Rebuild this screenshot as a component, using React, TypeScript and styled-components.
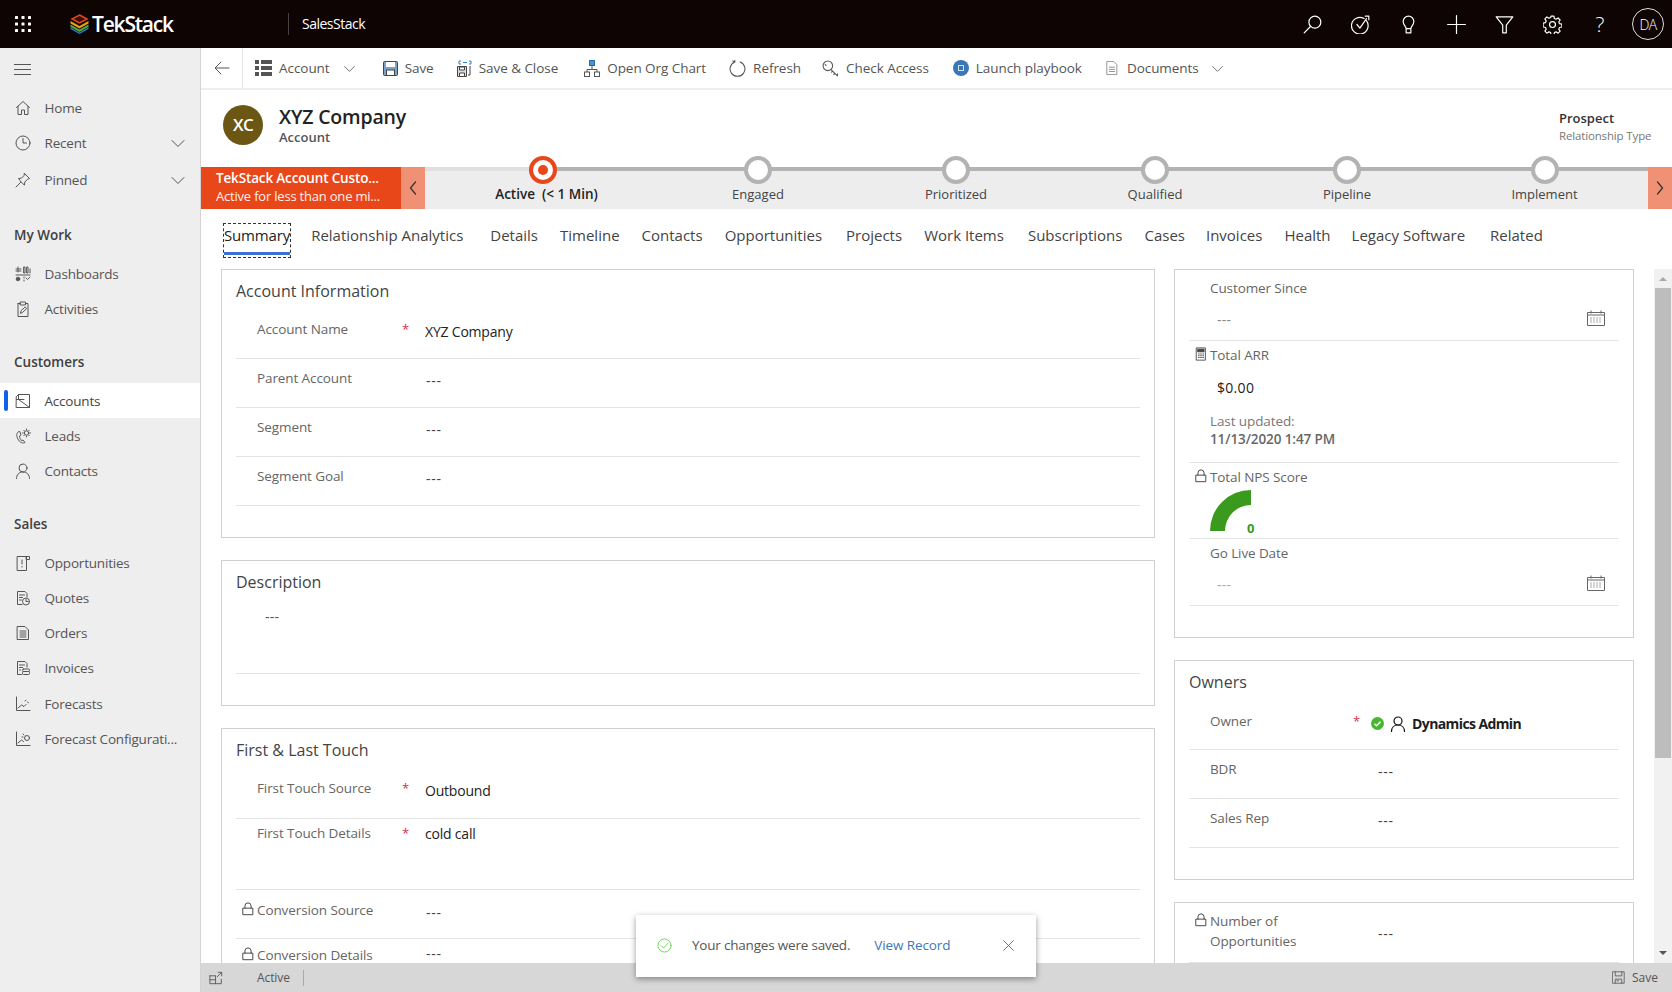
import React from "react";
import styled, { createGlobalStyle } from "styled-components";

const FONT = `"Open Sans", "Noto Sans", sans-serif`;

const Global = createGlobalStyle`
  html, body { margin: 0; padding: 0; height: 100%; overflow: hidden; background: #fff; }
  body { font-family: ${FONT}; font-size: 14px; color: #333; }
  #root { height: 100%; }
  * { box-sizing: border-box; }
`;

const Shell = styled.div`
  width: 1672px;
  height: 992px;
  position: relative;
  display: flex;
  flex-direction: column;
  overflow: hidden;
`;

/* ---------- top bar ---------- */
const TopBar = styled.header`
  height: 48px;
  flex: none;
  background: #0f0404;
  color: #fff;
  display: flex;
  align-items: center;
`;
const Waffle = styled.div`
  width: 46px;
  display: flex;
  justify-content: center;
`;
const Brand = styled.div`
  width: 242px;
  padding-left: 24px;
  display: flex;
  align-items: center;
  gap: 3px;
`;
const BrandName = styled.span`
  font-family: "Open Sans", sans-serif;
  font-size: 21px;
  font-weight: 600;
  letter-spacing: -1.2px;
`;
const AppName = styled.div`
  border-left: 1px solid #4a4040;
  height: 22px;
  padding-left: 13px;
  font-size: 14px;
  line-height: 22px;
  letter-spacing: -0.5px;
`;
const TopActions = styled.div`
  margin-left: auto;
  display: flex;
  align-items: center;
`;
const TopAction = styled.div`
  width: 48px;
  height: 48px;
  display: flex;
  align-items: center;
  justify-content: center;
  font-size: 21px;
  font-weight: 300;
`;
const Avatar = styled.div`
  width: 32px;
  height: 32px;
  border-radius: 50%;
  border: 1px solid #ddd;
  display: flex;
  align-items: center;
  justify-content: center;
  font-size: 14px;
  letter-spacing: -0.6px;
`;

/* ---------- body ---------- */
const Body = styled.div`
  flex: 1;
  min-height: 0;
  display: flex;
`;
const Sidebar = styled.nav`
  width: 201px;
  flex: none;
  background: #eeeeee;
  border-right: 1px solid #d4d4d4;
  color: #555;
`;
const Burger = styled.div`
  height: 42px;
  padding-left: 14px;
  display: flex;
  align-items: center;
`;
const NavRow = styled.div<{ $active?: boolean; $top?: number }>`
  height: 35px;
  margin-top: ${(p) => p.$top ?? 0}px;
  padding-left: 15px;
  padding-right: 14px;
  display: flex;
  align-items: center;
  position: relative;
  background: ${(p) => (p.$active ? "#fff" : "transparent")};
  color: ${(p) => (p.$active ? "#444" : "#555")};

  &::before {
    content: "";
    display: ${(p) => (p.$active ? "block" : "none")};
    position: absolute;
    left: 4px;
    top: 7px;
    bottom: 7px;
    width: 4px;
    border-radius: 2px;
    background: #1160e8;
  }
`;
const NavIcon = styled.span`
  width: 29.5px;
  flex: none;
  display: flex;
  align-items: center;
`;
const NavLabel = styled.span`
  flex: 1;
  white-space: nowrap;
  font-size: 13.5px;
  letter-spacing: -0.2px;
`;
const NavHeading = styled.div<{ $top: number }>`
  margin-top: ${(p) => p.$top}px;
  margin-bottom: 11px;
  padding-left: 14px;
  height: 20px;
  line-height: 20px;
  font-size: 13.5px;
  font-weight: 600;
  color: #3f3f3f;
`;

const Main = styled.main`
  flex: 1;
  min-width: 0;
  display: flex;
  flex-direction: column;
`;
const Toolbar = styled.div`
  height: 42px;
  flex: none;
  display: flex;
  align-items: center;
  border-bottom: 2px solid #eeeeee;
  color: #555;
`;
const BackButton = styled.div`
  width: 42px;
  height: 40px;
  border-right: 1px solid #e6e6e6;
  display: flex;
  align-items: center;
  justify-content: center;
`;
const ToolItem = styled.div<{ $left: number; $gap?: number }>`
  margin-left: ${(p) => p.$left}px;
  display: flex;
  align-items: center;
  gap: ${(p) => p.$gap ?? 7}px;
  white-space: nowrap;
  font-size: 13.5px;
  letter-spacing: -0.05px;
`;
const ToolChevron = styled.span<{ $gap?: number }>`
  margin-left: ${(p) => p.$gap ?? 6}px;
  display: flex;
`;

const RecordHeader = styled.div`
  height: 77px;
  flex: none;
  display: flex;
  align-items: center;
  padding: 0 20px 8px 22px;
`;
const RecordAvatar = styled.div`
  width: 40px;
  height: 40px;
  border-radius: 50%;
  background: #6b5713;
  color: #fff;
  display: flex;
  align-items: center;
  justify-content: center;
  font-size: 17px;
  font-weight: 600;
  letter-spacing: -0.8px;
  margin-right: 16px;
`;
const RecordTitle = styled.div`
  font-size: 19.5px;
  font-weight: 600;
  color: #222;
  line-height: 25px;
  letter-spacing: -0.2px;
`;
const RecordType = styled.div`
  font-size: 13px;
  font-weight: 600;
  color: #555;
  line-height: 17px;
`;
const RecordMeta = styled.div`
  margin-left: auto;
  margin-top: 4px;
  width: 94px;
  margin-right: -1px;
`;
const MetaValue = styled.div`
  font-size: 13px;
  font-weight: 600;
  color: #333;
  line-height: 18px;
`;
const MetaLabel = styled.div`
  font-size: 11.5px;
  color: #777;
  line-height: 17px;
  white-space: nowrap;
  letter-spacing: -0.15px;
`;

const ProcessBar = styled.div`
  height: 42px;
  flex: none;
  display: flex;
  background:
    linear-gradient(to right, #dfdfdf 342px, #b3b3b3 342px) no-repeat top left / 100% 4px,
    #ededed;
`;
const ActiveStage = styled.div`
  width: 200px;
  flex: none;
  background: #e8471a;
  color: #fff;
  padding: 3px 0 0 15px;
  white-space: nowrap;
  overflow: hidden;
`;
const StageName = styled.div`
  font-size: 13.5px;
  font-weight: 600;
  line-height: 17px;
  letter-spacing: -0.15px;
`;
const StageTime = styled.div`
  font-size: 13px;
  line-height: 19px;
  letter-spacing: -0.2px;
  color: #fff0ea;
`;
const StepNav = styled.div`
  width: 24px;
  flex: none;
  background: #f09074;
  display: flex;
  align-items: center;
  justify-content: center;
  color: #333;
`;
const Stages = styled.div`
  flex: 1;
  display: flex;
`;
const Stage = styled.div<{ $width: number; $current?: boolean }>`
  width: ${(p) => p.$width}px;
  flex: none;
  display: flex;
  flex-direction: column;
  align-items: center;
  font-size: ${(p) => (p.$current ? 13.5 : 13)}px;
  font-weight: ${(p) => (p.$current ? 600 : 400)};
  color: ${(p) => (p.$current ? "#222" : "#444")};
  white-space: nowrap;
`;
const StageDot = styled.span<{ $current?: boolean }>`
  width: 28px;
  height: 28px;
  margin-top: -11px;
  border-radius: 50%;
  background: #fff;
  border: 4px solid ${(p) => (p.$current ? "#e8471a" : "#b3b3b3")};
  display: flex;
  align-items: center;
  justify-content: center;

  &::after {
    content: "";
    display: ${(p) => (p.$current ? "block" : "none")};
    width: 10px;
    height: 10px;
    border-radius: 50%;
    background: #e8471a;
  }
`;
const StageLabel = styled.span<{ $current?: boolean }>`
  line-height: 20px;
  margin-left: ${(p) => (p.$current ? 7 : 0)}px;
`;

const Tabs = styled.div`
  height: 48px;
  flex: none;
  padding: 15px 0 0 23px;
  display: flex;
  font-size: 15px;
  color: #444;
`;
const Tab = styled.div<{ $selected?: boolean; $left: number }>`
  margin-left: ${(p) => p.$left}px;
  height: 33px;
  line-height: 22px;
  white-space: nowrap;
  color: ${(p) => (p.$selected ? "#222" : "#444")};
  ${(p) => (p.$selected ? `letter-spacing: -0.15px; outline: 1px dashed #333; box-shadow: inset 0 -2px 0 #fff, inset 0 -5px 0 #3a6fd8;` : "")}
`;

const Content = styled.div`
  flex: 1;
  min-height: 0;
  display: flex;
  overflow: hidden;
`;
const Columns = styled.div`
  flex: 1;
  display: grid;
  grid-template-columns: 934px 460px;
  column-gap: 19px;
  padding: 12px 0 0 20px;
  align-items: start;
`;
const Column = styled.div`
  display: flex;
  flex-direction: column;
  gap: 22px;
  min-width: 0;
`;
const Card = styled.section<{ $height?: number }>`
  border: 1px solid #d0d0d0;
  padding: 0 14px;
  ${(p) => (p.$height ? `height: ${p.$height}px;` : "")}
  overflow: hidden;
`;
const CardTitle = styled.h2`
  margin: 0;
  padding-top: 10px;
  height: 42px;
  font-size: 16px;
  font-weight: 400;
  line-height: 22px;
  color: #444;
`;
const Row = styled.div<{ $height: number; $top?: number }>`
  height: ${(p) => p.$height}px;
  display: flex;
  align-items: flex-start;
  border-bottom: 1px solid #e4e4e4;
  padding-top: ${(p) => p.$top ?? 9}px;
`;
const LockSlot = styled.span`
  width: 21px;
  flex: none;
  padding-left: 5px;
  margin-top: 2px;
  display: flex;
  color: #333;
`;
const Label = styled.span<{ $width?: number }>`
  ${(p) => (p.$width ? `width: ${p.$width}px; flex: none;` : "")}
  font-size: 13.5px;
  line-height: 20px;
  color: #666;
  letter-spacing: -0.1px;
`;
const Star = styled.span<{ $width: number }>`
  width: ${(p) => p.$width}px;
  flex: none;
  color: #d1334a;
  font-size: 13px;
  line-height: 20px;
`;
const Value = styled.span<{ $dim?: boolean; $offset?: number }>`
  font-size: 14px;
  line-height: 14px;
  margin-top: ${(p) => p.$offset ?? 6}px;
  margin-left: ${(p) => (p.$dim ? 0 : -1)}px;
  color: ${(p) => (p.$dim ? "#444" : "#222")};
  font-weight: 500;
  letter-spacing: ${(p) => (p.$dim ? "0.8px" : "-0.2px")};
`;

const Stack = styled.div<{ $height: number; $top: number }>`
  height: ${(p) => p.$height}px;
  border-bottom: 1px solid #e4e4e4;
  padding-top: ${(p) => p.$top}px;
`;
const StackHead = styled.div`
  display: flex;
  align-items: flex-start;
`;
const PlainValue = styled.div<{ $pad: number; $top: number; $color?: string; $weight?: number }>`
  padding-left: ${(p) => p.$pad}px;
  margin-top: ${(p) => p.$top}px;
  display: flex;
  align-items: center;
  justify-content: space-between;
  padding-right: 14px;
  font-size: 14px;
  line-height: 20px;
  color: ${(p) => p.$color ?? "#888"};
  font-weight: ${(p) => p.$weight ?? 400};
  letter-spacing: 0.3px;

  svg {
    margin-top: -5px;
  }
`;
const UpdatedBlock = styled.div`
  margin: 14px 0 0 21px;
  font-size: 13.5px;
  line-height: 18px;
  color: #777;
  letter-spacing: -0.1px;
`;
const UpdatedDate = styled.div`
  font-weight: 600;
  color: #666;
`;
const Gauge = styled.div`
  margin: 3px 0 0 21px;
  display: flex;
  align-items: flex-end;
`;
const GaugeScore = styled.span`
  margin: 0 0 -4px -4px;
  font-size: 13px;
  font-weight: 700;
  line-height: 14px;
  color: #3a9a1d;
`;
const OwnerValue = styled.span`
  display: flex;
  align-items: center;
  gap: 6px;
  margin: 3px 0 0 -7px;
  font-size: 14px;
  font-weight: 700;
  color: #1d1d1d;
  letter-spacing: -0.6px;
`;

const Scrollbar = styled.div`
  width: 18px;
  flex: none;
  margin-top: 12px;
  background: #f1f1f1;
  display: flex;
  flex-direction: column;
  align-items: center;
  justify-content: space-between;
  padding-top: 8px;
  padding-bottom: 8px;
  position: relative;
`;
const ScrollThumb = styled.div`
  position: absolute;
  left: 1px;
  right: 1px;
  top: 19px;
  height: 470px;
  background: #bdbdbd;
`;
const ScrollArrow = styled.span<{ $down?: boolean }>`
  width: 0;
  height: 0;
  border-left: 4px solid transparent;
  border-right: 4px solid transparent;
  ${(p) => (p.$down ? "border-top: 4px solid #555;" : "border-bottom: 4px solid #aaa;")}
`;

const StatusBar = styled.footer`
  height: 29px;
  flex: none;
  background: #d7d7d7;
  display: flex;
  align-items: center;
  padding: 0 14px 0 8px;
  font-size: 12px;
  color: #555;
`;
const StatusText = styled.span`
  margin-left: 34px;
  padding-right: 13px;
  border-right: 1px solid #aaa;
  line-height: 16px;
  letter-spacing: -0.1px;
`;
const StatusSave = styled.span`
  margin-left: auto;
  display: flex;
  align-items: center;
  gap: 7px;
`;

const Toast = styled.div`
  position: absolute;
  left: 636px;
  top: 915px;
  width: 400px;
  height: 62px;
  background: #fff;
  box-shadow: 0 2px 6px rgba(0, 0, 0, 0.4);
  display: flex;
  align-items: center;
  padding: 0 21px 2px 21px;
  font-size: 13.5px;
  color: #555;
`;
const ToastText = styled.span`
  margin-left: 20px;
  white-space: nowrap;
  letter-spacing: -0.2px;
`;
const ToastLink = styled.span`
  margin-left: 24px;
  color: #3b79b5;
  white-space: nowrap;
  letter-spacing: -0.1px;
`;
const ToastClose = styled.span`
  margin-left: auto;
  display: flex;
`;

/* ---------- drawings ---------- */
const Ic = ({ s = 16, c = "#555", w = 1, children }: { s?: number; c?: string; w?: number; children: React.ReactNode }) => (
  <svg width={s} height={s} viewBox="0 0 16 16" fill="none" stroke={c} strokeWidth={w} strokeLinecap="round" strokeLinejoin="round">
    {children}
  </svg>
);

const Chevron = ({ s = 16, c = "#555" }: { s?: number; c?: string }) => (
  <Ic s={s} c={c}><path d="M2 5.500l6 6 6-6" /></Ic>
);
const Lock = ({ c = "#333" }: { c?: string }) => (
  <Ic s={14} c={c}><path d="M2.500 7h11v7.500h-11zM4.500 7V4.500a3.500 3.500 0 0 1 7 0V7" /></Ic>
);
const Calc = () => (
  <Ic s={14} c="#444">
    <path d="M3 1h10v14H3z" />
    <path d="M4.500 2.500h7v3h-7z" fill="#444" />
    <path d="M5 8h1M7.500 8h1M10 8h1M5 10h1M7.500 10h1M10 10h1M5 12h1M7.500 12h1M10 12h1" />
  </Ic>
);
const Calendar = () => (
  <svg width="18" height="16" viewBox="0 0 18 16" fill="none" stroke="#666" strokeWidth="1">
    <path d="M.5 2.500h17v13H.5z" />
    <path d="M.5 5h17M4 .5v3M14 .5v3" />
    <path d="M3 8h12M3 10h12M3 12h12" stroke="#aaa" strokeDasharray="2 1" />
  </svg>
);

const icons: Record<string, React.ReactNode> = {
  home: <Ic><path d="M1.500 7.500L8 1.500l6.500 6M3 6.200v8.300h3.500V10h3v4.500H13V6.200" /></Ic>,
  clock: <Ic><circle cx="8" cy="8" r="7" /><path d="M8 3.500V8h3.500" /></Ic>,
  pin: <Ic><path d="M1 15l4.600-4.600M9.500 1.500l5 5-2 .8-2.700 2.700-.3 3-2-1.500L5 8.500 3.500 6.500l3-.3L9 3.500z" /></Ic>,
  dash: (
    <Ic>
      <path d="M1 5h5M1 3h5M3 1v5M9 1h1v6H9zM12 1h1v6h-1zM15 3v4M1 9h14" />
      <circle cx="3" cy="13" r="1.800" fill="#555" />
      <path d="M9 11v1M9 14v1M11 12l1.500 1.500L15 11" />
    </Ic>
  ),
  activity: <Ic><path d="M3 2.500h2.500M10.500 2.500H13v13H3v-13M5.500 1h5v3h-5zM5.500 12l.7-2.500 4-3.500 1.500 1.500-4 3.800z" /></Ic>,
  account: <Ic><path d="M1.500 3.500l2-2h11v13h-13zM3.500 1.500v5l11 8M1.500 6.500H9" /></Ic>,
  lead: <Ic><path d="M3 4c-2 2-1.500 5 .5 8s4.500 3.500 6.500 2.500l-2-2.500-1.500.7C5.500 11.500 4.500 9.500 4.500 8L6 7 5 4z" /><circle cx="11.500" cy="5" r="2.200" /><path d="M11.500 1v.8M11.500 8.200V9M7.500 5h.8M14.700 5h.8M8.800 2.300l.6.6M13.600 7.100l.6.6M14.200 2.300l-.6.6M9.400 7.100l-.6.6" /></Ic>,
  person: <Ic><circle cx="8" cy="5" r="4" /><path d="M1.500 15.500c0-3.800 2.500-6.500 6.500-6.500s6.500 2.700 6.500 6.500" /></Ic>,
  opp: <Ic><path d="M2.500 1.500h9v14h-9zM11.500 1.500h3v3h-3zM7 5v4M7 11.500v.5" /></Ic>,
  quote: <Ic><path d="M7 14.500H2.500v-13H10l2 2V7M4.500 5h5M4.500 7.500h3M4.500 10h2" /><circle cx="11" cy="11.500" r="3.500" /><path d="M11 9.500v2h2" /></Ic>,
  order: <Ic><path d="M2.500 1.500H10l3.500 3.500v9.500h-11zM5 6h6M5 8h6M5 10h6M5 12h6" /></Ic>,
  invoice: <Ic><path d="M6.500 14.500H2.500v-13H10l2 2V7M4.500 5h5M4.500 7.500h3M4.500 10h1" /><rect x="7.500" y="9" width="7" height="2.500" rx="1" /><rect x="7.500" y="11.500" width="7" height="3" rx="1" /></Ic>,
  forecast: <Ic><path d="M1.500 1v13.500H15M3 12l3.500-3 2.500 1.500 2-2M12.500 6l1 .8M10 5l1-.8" /></Ic>,
  config: <Ic><path d="M1.500 1v13.500H15M3 12l3.500-3 2 1.500" /><circle cx="12" cy="7" r="2.500" /><path d="M8 3l1 1M7 6h1" /></Ic>,
};

const nav = (icon: string, label: string, opts: { chev?: boolean; active?: boolean; top?: number } = {}) => (
  <NavRow key={label} $active={opts.active} $top={opts.top}>
    <NavIcon>{icons[icon]}</NavIcon>
    <NavLabel>{label}</NavLabel>
    {opts.chev && <Chevron />}
  </NavRow>
);

const stages = [
  { name: "Active  (< 1 Min)", width: 236, current: true },
  { name: "Engaged", width: 194 },
  { name: "Prioritized", width: 202 },
  { name: "Qualified", width: 196 },
  { name: "Pipeline", width: 188 },
  { name: "Implement", width: 207 },
];

const tabs = [
  { name: "Summary", left: 0, selected: true },
  { name: "Relationship Analytics", left: 21 },
  { name: "Details", left: 27 },
  { name: "Timeline", left: 22 },
  { name: "Contacts", left: 22 },
  { name: "Opportunities", left: 22 },
  { name: "Projects", left: 24 },
  { name: "Work Items", left: 22 },
  { name: "Subscriptions", left: 24 },
  { name: "Cases", left: 22 },
  { name: "Invoices", left: 21 },
  { name: "Health", left: 22 },
  { name: "Legacy Software", left: 21 },
  { name: "Related", left: 25 },
];

const Field = ({
  label,
  value,
  height = 49,
  required,
  locked,
  labelWidth = 145,
  starWidth = 24,
  strong,
  top,
  valueOffset,
}: {
  label: string;
  value: string;
  height?: number;
  required?: boolean;
  locked?: boolean;
  labelWidth?: number;
  starWidth?: number;
  strong?: boolean;
  top?: number;
  valueOffset?: number;
}) => (
  <Row $height={height} $top={top}>
    <LockSlot>{locked && <Lock />}</LockSlot>
    <Label $width={labelWidth}>{label}</Label>
    <Star $width={starWidth}>{required ? "*" : ""}</Star>
    <Value $dim={!strong} $offset={valueOffset}>{value}</Value>
  </Row>
);

export default function App() {
  return (
    <Shell>
      <Global />
      <TopBar>
        <Waffle>
          <svg width="16" height="16" viewBox="0 0 16 16" fill="#fff">
            {[1.5, 8, 14.5].flatMap((y) =>
              [1.5, 8, 14.5].map((x) => <rect key={`${x}-${y}`} x={x - 1.5} y={y - 1.5} width="3" height="3" rx="0.6" />)
            )}
          </svg>
        </Waffle>
        <Brand>
          <svg width="19" height="20" viewBox="0 0 18 20">
            <path d="M9 1l7.500 4L9 9 1.500 5z" fill="#3a0f08" stroke="#e8471a" strokeWidth="1.500" />
            <path d="M0 7l9 5 9-5v2.500l-9 5-9-5z" fill="#e8a21a" />
            <path d="M0 10.500l9 5 9-5V13l-9 5-9-5z" fill="#4fa53a" />
            <path d="M0 13.500l9 5 9-5V15l-9 5-9-5z" fill="#2a80c8" />
          </svg>
          <BrandName>TekStack</BrandName>
        </Brand>
        <AppName>SalesStack</AppName>
        <TopActions>
          <TopAction>
            <Ic s={19} c="#fff"><circle cx="10" cy="6" r="5" /><path d="M6.500 9.500L1 15" /></Ic>
          </TopAction>
          <TopAction>
            <Ic s={19} c="#fff"><path d="M13 4.800a7 7 0 1 1-2-1.800" /><path d="M5 8l2.500 3L13 3M12 1h3v3" /></Ic>
          </TopAction>
          <TopAction>
            <Ic s={19} c="#fff"><path d="M6 11.500C6 9.500 3.500 8.500 3.500 5.500a4.500 4.500 0 0 1 9 0c0 3-2.500 4-2.500 6zM6 11.500h4v3.500H6z" /></Ic>
          </TopAction>
          <TopAction>
            <Ic s={19} c="#fff"><path d="M8 .5v15M.5 8h15" /></Ic>
          </TopAction>
          <TopAction>
            <Ic s={19} c="#fff"><path d="M1 1.500h14L9.500 8.500V15h-3V8.500z" /></Ic>
          </TopAction>
          <TopAction>
            <Ic s={19} c="#fff">
              <circle cx="8" cy="8" r="2.500" />
              <path d="M6.800 1h2.400l.4 2 1.400.6 1.700-1.100 1.700 1.700-1.100 1.700.6 1.400 2 .4v2.400l-2 .4-.6 1.400 1.100 1.700-1.700 1.700-1.700-1.100-1.400.6-.4 2H6.800l-.4-2-1.400-.6-1.700 1.100-1.700-1.700 1.100-1.700-.6-1.400-2-.4V6.800l2-.4.6-1.400-1.100-1.700 1.700-1.700 1.700 1.100 1.400-.6z" />
            </Ic>
          </TopAction>
          <TopAction>?</TopAction>
          <TopAction>
            <Avatar>DA</Avatar>
          </TopAction>
        </TopActions>
      </TopBar>

      <Body>
        <Sidebar>
          <Burger>
            <svg width="17" height="11" viewBox="0 0 17 11" stroke="#555" strokeWidth="1">
              <path d="M0 .5h17M0 5.500h17M0 10.500h17" />
            </svg>
          </Burger>
          {nav("home", "Home")}
          {nav("clock", "Recent", { chev: true })}
          {nav("pin", "Pinned", { chev: true, top: 2 })}
          <NavHeading $top={28}>My Work</NavHeading>
          {nav("dash", "Dashboards")}
          {nav("activity", "Activities")}
          <NavHeading $top={26}>Customers</NavHeading>
          {nav("account", "Accounts", { active: true })}
          {nav("lead", "Leads")}
          {nav("person", "Contacts")}
          <NavHeading $top={26}>Sales</NavHeading>
          {nav("opp", "Opportunities")}
          {nav("quote", "Quotes")}
          {nav("order", "Orders")}
          {nav("invoice", "Invoices")}
          {nav("forecast", "Forecasts", { top: 1 })}
          {nav("config", "Forecast Configurati...")}
        </Sidebar>

        <Main>
          <Toolbar>
            <BackButton>
              <Ic s={16}><path d="M15 8H1.500M7 2L1 8l6 6" /></Ic>
            </BackButton>
            <ToolItem $left={12}>
              <svg width="17" height="16" viewBox="0 0 17 16" fill="#555">
                <path d="M0 0h4v4H0zM6 0h11v4H6zM0 6h4v4H0zM6 6h11v4H6zM0 12h4v4H0zM6 12h11v4H6z" />
              </svg>
              Account
              <ToolChevron><Chevron s={13} /></ToolChevron>
            </ToolItem>
            <ToolItem $left={27}>
              <svg width="15" height="15" viewBox="0 0 15 15">
                <rect x="0.5" y="0.5" width="14" height="14" rx="1" fill="#7aa3cc" stroke="#444" />
                <rect x="3" y="1" width="9" height="5" fill="#fff" />
                <rect x="3.500" y="9" width="8" height="5.500" fill="#fff" stroke="#444" />
              </svg>
              Save
            </ToolItem>
            <ToolItem $left={23} $gap={6}>
              <svg width="16" height="17" viewBox="0 0 16 17" fill="none" stroke="#444">
                <path d="M.5 6.500h9v10h-9z" fill="#ddd" />
                <path d="M2.500 7h5v3h-5zM2.500 13h5v3.500h-5z" fill="#fff" />
                <path d="M4 1H2v3h2M12 1h2v3h-2M6 2.500h4" stroke="#2a80c8" />
                <path d="M13 6v9h-2" />
              </svg>
              Save &amp; Close
            </ToolItem>
            <ToolItem $left={26}>
              <svg width="16" height="17" viewBox="0 0 16 17" fill="none" stroke="#555">
                <rect x="5.500" y="0.500" width="5" height="5" fill="#4a90d9" stroke="#2a6bb0" />
                <path d="M8 5.500v4M3 12V9.500h10V12" />
                <rect x="0.500" y="12" width="5" height="4.500" />
                <rect x="10.500" y="12" width="5" height="4.500" />
              </svg>
              Open Org Chart
            </ToolItem>
            <ToolItem $left={23}>
              <Ic s={17}><path d="M10.500 1.800a7 7 0 1 1-5 0M5.500 1.800V0M5.500 1.800L3.500 1" /></Ic>
              Refresh
            </ToolItem>
            <ToolItem $left={21}>
              <Ic s={17}><circle cx="5.500" cy="5.500" r="4.500" /><path d="M8.500 9l6 6v-2M12 12.500l-1 1M10 10.500l-1 1" /><path d="M3 4a1 1 0 0 0 1 1" /></Ic>
              Check Access
            </ToolItem>
            <ToolItem $left={24}>
              <svg width="16" height="16" viewBox="0 0 16 16">
                <circle cx="8" cy="8" r="8" fill="#3a78b5" />
                <rect x="5.500" y="5.500" width="5" height="5" fill="none" stroke="#cfe0f0" />
              </svg>
              Launch playbook
            </ToolItem>
            <ToolItem $left={23} $gap={8}>
              <Ic s={14} c="#888"><path d="M2.500 .5H10l3.500 3.500v11.500h-11zM5 7h6M5 9.500h6M5 12h6" /></Ic>
              Documents
              <ToolChevron $gap={4}><Chevron s={13} /></ToolChevron>
            </ToolItem>
          </Toolbar>

          <RecordHeader>
            <RecordAvatar>XC</RecordAvatar>
            <div>
              <RecordTitle>XYZ Company</RecordTitle>
              <RecordType>Account</RecordType>
            </div>
            <RecordMeta>
              <MetaValue>Prospect</MetaValue>
              <MetaLabel>Relationship Type</MetaLabel>
            </RecordMeta>
          </RecordHeader>

          <ProcessBar>
            <ActiveStage>
              <StageName>TekStack Account Custo...</StageName>
              <StageTime>Active for less than one mi...</StageTime>
            </ActiveStage>
            <StepNav>
              <Ic s={16} c="#333" w={1.2}><path d="M10.500 2l-5 6 5 6" /></Ic>
            </StepNav>
            <Stages>
              {stages.map((s) => (
                <Stage key={s.name} $width={s.width} $current={s.current}>
                  <StageDot $current={s.current} />
                  <StageLabel $current={s.current}>{s.name.replace("  ", "\u00a0\u00a0")}</StageLabel>
                </Stage>
              ))}
            </Stages>
            <StepNav>
              <Ic s={16} c="#333" w={1.2}><path d="M5.500 2l5 6-5 6" /></Ic>
            </StepNav>
          </ProcessBar>

          <Tabs>
            {tabs.map((t) => (
              <Tab key={t.name} $selected={t.selected} $left={t.left}>
                {t.name}
              </Tab>
            ))}
          </Tabs>

          <Content>
            <Columns>
              <Column>
                <Card $height={269}>
                  <CardTitle>Account Information</CardTitle>
                  <Field label="Account Name" value="XYZ Company" required strong height={47} top={7} />
                  <Field label="Parent Account" value="---" />
                  <Field label="Segment" value="---" />
                  <Field label="Segment Goal" value="---" />
                </Card>
                <Card $height={146}>
                  <CardTitle>Description</CardTitle>
                  <Row $height={71} $top={4}>
                    <PlainValue $pad={29} $top={0} $color="#555">---</PlainValue>
                  </Row>
                </Card>
                <Card>
                  <CardTitle>First &amp; Last Touch</CardTitle>
                  <Field label="First Touch Source" value="Outbound" required strong height={48} top={7} />
                  <Row $height={71} $top={4}>
                    <LockSlot />
                    <Label $width={145}>First Touch Details</Label>
                    <Star $width={24}>*</Star>
                    <Value $offset={4}>cold call</Value>
                  </Row>
                  <Field label="Conversion Source" value="---" locked height={49} top={10} />
                  <Field label="Conversion Details" value="---" locked height={49} top={6} valueOffset={2} />
                </Card>
              </Column>

              <Column>
                <Card $height={369}>
                  <Stack $height={71} $top={8}>
                    <StackHead><LockSlot /><Label>Customer Since</Label></StackHead>
                    <PlainValue $pad={28} $top={12}>---<Calendar /></PlainValue>
                  </Stack>
                  <Stack $height={122} $top={4}>
                    <StackHead><LockSlot><Calc /></LockSlot><Label>Total ARR</Label></StackHead>
                    <PlainValue $pad={28} $top={13} $color="#222" $weight={500}>$0.00</PlainValue>
                    <UpdatedBlock>
                      Last updated:
                      <UpdatedDate>11/13/2020 1:47 PM</UpdatedDate>
                    </UpdatedBlock>
                  </Stack>
                  <Stack $height={76} $top={4}>
                    <StackHead><LockSlot><Lock /></LockSlot><Label>Total NPS Score</Label></StackHead>
                    <Gauge>
                      <svg width="41" height="41" viewBox="0 0 41 41">
                        <path d="M0 41A41 41 0 0 1 41 0v15A26 26 0 0 0 15 41z" fill="#3a9a1d" />
                      </svg>
                      <GaugeScore>0</GaugeScore>
                    </Gauge>
                  </Stack>
                  <Stack $height={67} $top={4}>
                    <StackHead><LockSlot /><Label>Go Live Date</Label></StackHead>
                    <PlainValue $pad={28} $top={12} $color="#aaa">---<Calendar /></PlainValue>
                  </Stack>
                </Card>
                <Card $height={220}>
                  <CardTitle>Owners</CardTitle>
                  <Row $height={47} $top={8}>
                    <LockSlot />
                    <Label $width={143}>Owner</Label>
                    <Star $width={25}>*</Star>
                    <OwnerValue>
                      <svg width="13" height="13" viewBox="0 0 13 13">
                        <circle cx="6.500" cy="6.500" r="6.500" fill="#45b82e" />
                        <path d="M3.500 6.800l2 2 4-4" fill="none" stroke="#fff" strokeWidth="1.500" />
                      </svg>
                      <Ic s={16} c="#111" w={1.2}><circle cx="8" cy="5" r="4" /><path d="M1.500 15.500c0-3.800 2.500-6.500 6.500-6.500s6.500 2.700 6.500 6.500" /></Ic>
                      Dynamics Admin
                    </OwnerValue>
                  </Row>
                  <Field label="BDR" value="---" labelWidth={143} starWidth={25} />
                  <Field label="Sales Rep" value="---" labelWidth={143} starWidth={25} />
                </Card>
                <Card>
                  <Row $height={60} $top={8}>
                    <LockSlot><Lock /></LockSlot>
                    <Label $width={168}>Number of<br />Opportunities</Label>
                    <Value $dim $offset={16}>---</Value>
                  </Row>
                </Card>
              </Column>
            </Columns>
            <Scrollbar>
              <ScrollArrow />
              <ScrollThumb />
              <ScrollArrow $down />
            </Scrollbar>
          </Content>

          <StatusBar>
            <Ic s={14}><path d="M1 5.500h6M1 5.500V14.500h13v-5M7.500 5.500V14.500M1 10h6.500M9.500 6.500L14 2M10.500 1.500H14.500V5.500" /></Ic>
            <StatusText>Active</StatusText>
            <StatusSave>
              <Ic s={13}><path d="M1 1h14v14H1zM4 1v5h8V1M4 15v-5h8v5M6 12h2" /></Ic>
              Save
            </StatusSave>
          </StatusBar>
        </Main>
      </Body>

      <Toast>
        <Ic s={15} c="#6fd35a"><circle cx="8" cy="8" r="7" /><path d="M4.500 8.200l2.500 2.500 4.500-5" /></Ic>
        <ToastText>Your changes were saved.</ToastText>
        <ToastLink>View Record</ToastLink>
        <ToastClose>
          <Ic s={13}><path d="M2 2l12 12M14 2L2 14" /></Ic>
        </ToastClose>
      </Toast>
    </Shell>
  );
}
